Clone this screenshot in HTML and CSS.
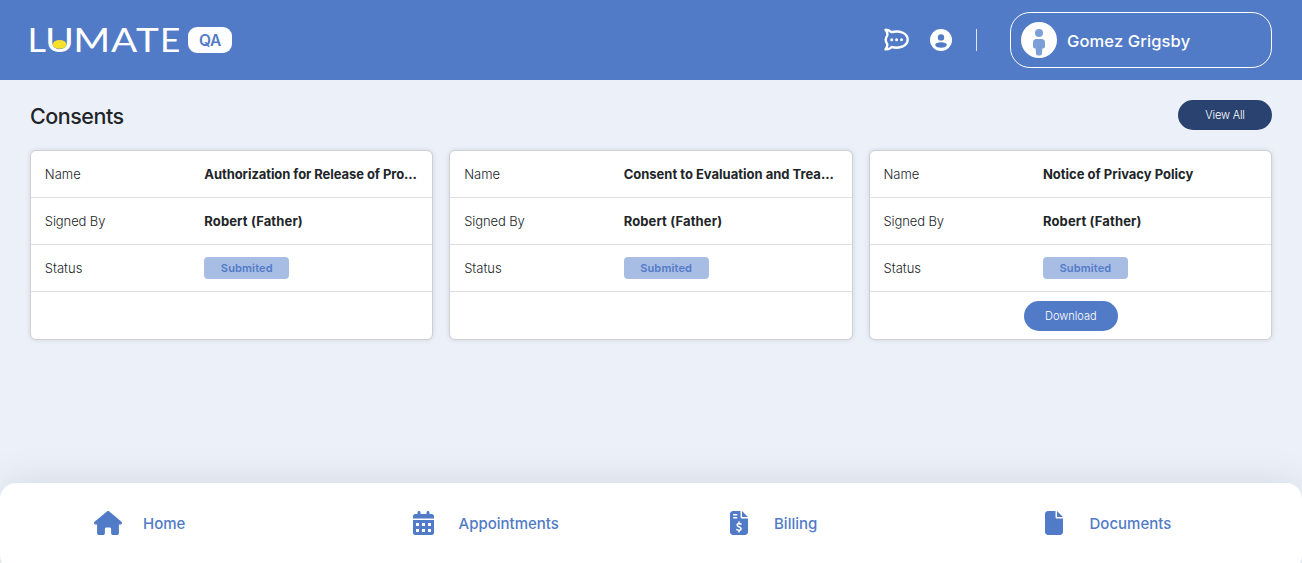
FILE: index.html
```html
<!DOCTYPE html>
<html lang="en">
<head>
<meta charset="utf-8">
<title>Lumate - Consents</title>
<link rel="stylesheet" href="styles.css">
</head>
<body>
<header class="topbar">
  <div class="brand">
    <svg class="logo" width="150" height="30" viewBox="0 0 150 30">
      <text class="logo-text" y="27"><tspan x="-2.500" textLength="18.500" lengthAdjust="spacingAndGlyphs">L</tspan></text>
      <text class="logo-text" y="27" x="15" textLength="29" lengthAdjust="spacingAndGlyphs">U</text>
      <text class="logo-text" y="27" x="43.300" textLength="37" lengthAdjust="spacingAndGlyphs">M</text>
      <text class="logo-text" y="27" x="81" textLength="26.300" lengthAdjust="spacingAndGlyphs">A</text>
      <text class="logo-text" y="27" x="106" textLength="22.800" lengthAdjust="spacingAndGlyphs">T</text>
      <text class="logo-text" y="27" x="130" textLength="20.300" lengthAdjust="spacingAndGlyphs">E</text>
      <ellipse cx="29.600" cy="19.400" rx="6.900" ry="4.400" fill="#f5e12b"/>
    </svg>
    <span class="env">QA</span>
  </div>
  <div class="tools">
    <svg class="chat" width="26" height="24" viewBox="0 0 26 24" fill="none" stroke="#fff" stroke-width="2.400" stroke-linejoin="round">
      <path d="M1.500 1.800C4.200 1.700 6.200 3 7.400 4.200C16 1.800 23.700 5.600 23.700 11.600C23.700 17.800 16 21.200 7.600 19C6 20.900 3.600 21.600 1.500 21.300C3.200 19.300 3.600 17.500 3.100 15.700C1.300 13.200 1.300 10.200 3.200 7.600C3.700 5.400 3.100 3.600 1.500 1.800Z"/>
      <g fill="#fff" stroke="none"><circle cx="7.700" cy="11.700" r="1.500"/><circle cx="12.600" cy="11.700" r="1.500"/><circle cx="17.500" cy="11.700" r="1.500"/></g>
    </svg>
    <svg class="account" width="22" height="22" viewBox="0 0 22 22">
      <circle cx="11" cy="11" r="11" fill="#fff"/>
      <circle cx="11" cy="8.400" r="3.200" fill="#517bc7"/>
      <ellipse cx="11" cy="16" rx="5.800" ry="2.700" fill="#517bc7"/>
    </svg>
    <span class="divider"></span>
    <div class="profile">
      <svg width="36" height="36" viewBox="0 0 36 36">
        <circle cx="18" cy="18" r="18" fill="#fff"/>
        <g fill="#7d9fd8"><circle cx="18" cy="11" r="4"/><path d="M15.500 17h5a3.500 3.500 0 0 1 3.500 3.500v4a2 2 0 0 1-2.600 1.900L21 31.500a2 2 0 0 1-2 2h-2a2 2 0 0 1-2-2l-.4-5.100a2 2 0 0 1-2.600-1.900v-4a3.500 3.500 0 0 1 3.500-3.500z"/></g>
      </svg>
      <span class="user">Gomez Grigsby</span>
    </div>
  </div>
</header>
<main class="content">
  <div class="heading">
    <h1 class="title">Consents</h1>
    <button class="pill dark">View All</button>
  </div>
  <div class="cards">
    <section class="card">
      <div class="row"><span class="label">Name</span><b class="value n1">Authorization for Release of Pro...</b></div>
      <div class="row"><span class="label signed">Signed By</span><b class="value signer">Robert (Father)</b></div>
      <div class="row"><span class="label">Status</span><span class="status">Submited</span></div>
      <div class="action"></div>
    </section>
    <section class="card">
      <div class="row"><span class="label">Name</span><b class="value">Consent to Evaluation and Trea...</b></div>
      <div class="row"><span class="label signed">Signed By</span><b class="value signer">Robert (Father)</b></div>
      <div class="row"><span class="label">Status</span><span class="status">Submited</span></div>
      <div class="action"></div>
    </section>
    <section class="card">
      <div class="row"><span class="label">Name</span><b class="value">Notice of Privacy Policy</b></div>
      <div class="row"><span class="label signed">Signed By</span><b class="value signer">Robert (Father)</b></div>
      <div class="row"><span class="label">Status</span><span class="status">Submited</span></div>
      <div class="action"><button class="pill">Download</button></div>
    </section>
  </div>
</main>
<nav class="bottom">
  <a class="tab"><span class="glyph"><svg width="28" height="24" viewBox="0 0 576 512" preserveAspectRatio="none"><path fill="#517bc7" d="M575.8 255.500c0 18-15 32.100-32 32.100h-32l.7 160.200c0 2.700-.2 5.400-.5 8.100V472c0 22.100-17.900 40-40 40H392c-22.100 0-40-17.900-40-40V384c0-17.700-14.300-32-32-32H256c-17.700 0-32 14.300-32 32v88c0 22.100-17.900 40-40 40H104c-22.100 0-40-17.900-40-40V287.600H32c-18 0-32-14-32-32.100c0-9 3-17 10-24L266.400 8c7-7 15-8 22-8s15 2 21 7L564.800 231.500c8 7 12 15 11 24z"/></svg></span><span>Home</span></a>
  <a class="tab"><span class="glyph"><svg width="21" height="24" viewBox="0 0 448 512"><path fill="#517bc7" fill-rule="evenodd" d="M96 32V64H48C21.500 64 0 85.500 0 112v48H448V112c0-26.500-21.500-48-48-48H352V32c0-17.700-14.300-32-32-32s-32 14.300-32 32V64H160V32c0-17.700-14.300-32-32-32S96 14.300 96 32zM448 192H0V464c0 26.500 21.500 48 48 48H400c26.500 0 48-21.500 48-48V192zM64 256h64v64H64zM192 256h64v64H192zM320 256h64v64H320zM64 384h64v64H64zM192 384h64v64H192zM320 384h64v64H320z"/></svg></span><span>Appointments</span></a>
  <a class="tab"><span class="glyph"><svg width="18" height="24" viewBox="0 0 384 512"><path fill="#517bc7" d="M64 0C28.700 0 0 28.700 0 64V448c0 35.300 28.700 64 64 64H320c35.300 0 64-28.700 64-64V160H256c-17.700 0-32-14.300-32-32V0H64zM256 0V128H384L256 0z"/><path fill="none" stroke="#fff" stroke-width="34" stroke-linecap="round" d="M80 80h64M80 144h64M192 235v30M192 415v30M235 279c-30-12-83-20-83 20 0 44 84 27 84 77 0 45-59 37-90 21"/></svg></span><span>Billing</span></a>
  <a class="tab"><span class="glyph"><svg width="18" height="24" viewBox="0 0 384 512"><path fill="#517bc7" d="M0 64C0 28.700 28.700 0 64 0H224V128c0 17.700 14.300 32 32 32H384V448c0 35.300-28.700 64-64 64H64c-35.300 0-64-28.700-64-64V64zm384 64H256V0L384 128z"/></svg></span><span>Documents</span></a>
</nav>
</body>
</html>
```
FILE: styles.css
```css
* { box-sizing: border-box; }
body {
  margin: 0;
  height: 563px;
  overflow: hidden;
  display: flex;
  flex-direction: column;
  background: #ecf1f9;
  color: #212529;
  font-family: Inter, "Liberation Sans", sans-serif;
}
.topbar {
  flex: none;
  height: 80px;
  padding: 0 30px;
  display: flex;
  align-items: center;
  justify-content: space-between;
  background: #517bc7;
  color: #fff;
}
.brand { display: flex; align-items: center; gap: 8px; }
.logo { overflow: visible; }
.logo-text { font: 400 33.500px Lato, sans-serif; fill: #fff; }
.env {
  width: 44px;
  height: 26px;
  border-radius: 9px;
  background: #fff;
  color: #517bc7;
  font-size: 15.500px;
  font-weight: 600;
  line-height: 27px;
  text-align: center;
  letter-spacing: -0.300px;
}
.tools { display: flex; align-items: center; }
.account { margin-left: 20px; }
.divider { width: 1px; height: 22px; margin: 0 33px 0 24px; background: #dfe7f5; }
.profile {
  width: 262px;
  height: 56px;
  padding: 0 10px;
  display: flex;
  align-items: center;
  gap: 10px;
  border: 1px solid #fff;
  border-radius: 20px;
}
.user { font-size: 16.500px; font-weight: 500; line-height: 22px; letter-spacing: 0.130px; padding-top: 2px; }
.content { flex: 1; padding: 20px 30px; }
.heading { display: flex; justify-content: space-between; height: 50px; }
.title { margin: 0; font-size: 21.500px; line-height: 33px; font-weight: 500; letter-spacing: -0.480px; }
.pill {
  width: 94px;
  height: 30px;
  padding: 0;
  border: 0;
  border-radius: 15px;
  background: #517bc7;
  color: #fff;
  font: 300 11px Inter, sans-serif;
}
.dark { background: #29426f; letter-spacing: -0.150px; }
.cards { display: grid; grid-template-columns: repeat(3, 1fr); gap: 16px; }
.card {
  height: 190px;
  border: 1px solid #cdd0d4;
  border-radius: 6px;
  background: #fff;
  box-shadow: 0 0 5px rgba(0, 0, 0, 0.12);
}
.row {
  height: 47px;
  padding-left: 13.800px;
  display: grid;
  grid-template-columns: 159.500px 1fr;
  align-items: center;
  border-bottom: 1px solid #dee2e6;
  font-size: 13px;
  white-space: nowrap;
}
.label { font-weight: 300; }
.signed { letter-spacing: -0.100px; }
.value { font-weight: 700; }
.n1 { letter-spacing: -0.070px; }
.signer { letter-spacing: 0.130px; }
.status {
  width: 85px;
  height: 22px;
  border-radius: 4px;
  background: #a8bde4;
  color: #517bc7;
  font-size: 11px;
  font-weight: 600;
  line-height: 22px;
  letter-spacing: 0.150px;
  text-align: center;
}
.action { height: 47px; padding: 9px 0 0 1px; display: flex; justify-content: center; }
.bottom {
  flex: none;
  height: 88px;
  margin-bottom: -8px;
  padding: 0 20px 8px;
  display: grid;
  grid-template-columns: repeat(4, 315.500px);
  align-items: center;
  border-radius: 16px;
  background: #fff;
  box-shadow: 0 0 40px rgba(0, 0, 0, 0.1);
}
.tab {
  padding-left: 73px;
  display: flex;
  align-items: center;
  color: #517bc7;
  font-size: 15px;
  font-weight: 500;
}
.glyph { width: 29px; margin-right: 21px; display: flex; justify-content: center; }
```
